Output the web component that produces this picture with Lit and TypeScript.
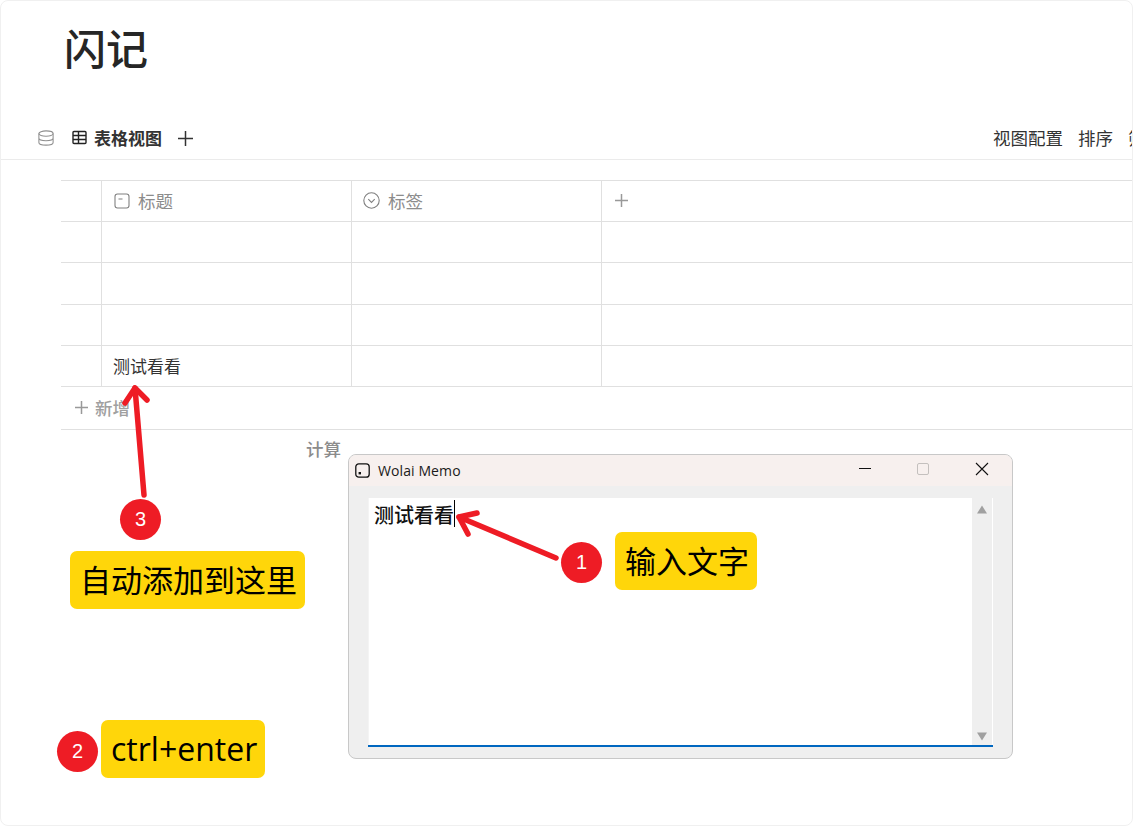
import { LitElement, html, css, svg } from "lit";
import { customElement } from "lit/decorators.js";

@customElement("app-root")
export class AppRoot extends LitElement {
  static styles = css`
    :host { display: block; width: 1133px; height: 826px; overflow: hidden; background: #fff; font-family: "Noto Sans CJK SC", "Noto Sans", sans-serif; color: #333; }
    .page { position: relative; box-sizing: border-box; width: 1133px; height: 826px; border: 1px solid #f0f0f0; border-radius: 8px; padding-top: 18px; overflow: hidden; background: #fff; }
    h1 { margin: 0 0 0 63px; font-size: 42px; line-height: 56px; font-weight: 500; color: #262626; height: 56px; }
    .bar { display: flex; align-items: center; height: 37px; padding-bottom: 3px; margin-top: 44px; border-bottom: 1px solid #ebebeb; padding-left: 37px; box-sizing: content-box; }
    .bar svg { flex: none; display: block; }
    .tab { display: flex; align-items: center; margin-left: 18px; font-size: 17px; font-weight: 700; color: #333; gap: 7px; }
    .add { margin-left: 16px; margin-top: 1px; }
    .right { margin-left: auto; display: flex; gap: 15px; font-size: 17.5px; color: #333; white-space: nowrap; width: 139px; overflow: hidden; }
    .table { margin: 20px 0 0 60px; border-top: 1px solid #e0e0e0; }
    .row { display: grid; grid-template-columns: 40px 250px 250px 1fr; border-bottom: 1px solid #e0e0e0; box-sizing: border-box; height: 41px; }
    .row.tall { height: 42px; }
    .cell { border-left: 1px solid #e0e0e0; display: flex; align-items: center; padding: 0 0 2px 11px; box-sizing: border-box; font-size: 17px; color: #333; gap: 8px; }
    .cell:first-child { border-left: none; }
    .head .cell { color: #8c8c8c; font-size: 17.5px; }
    .head .cell svg { flex: none; margin-top: 1px; }
    .pluscell { padding-left: 13px; }
    .new { display: flex; align-items: center; height: 43px; padding-bottom: 2px; box-sizing: border-box; border-bottom: 1px solid #e0e0e0; padding-left: 14px; gap: 7px; color: #a0a0a0; font-size: 17.5px; font-weight: 500; }
    .calc { position: absolute; left: 305px; top: 436px; font-size: 17.5px; color: #8c8c8c; line-height: 24px; font-weight: 500; }
    .win { position: absolute; left: 347px; top: 453px; width: 665px; height: 305px; box-sizing: border-box; border: 1px solid #c8c8c8; border-radius: 8px; background: #efefef; overflow: hidden; display: flex; flex-direction: column; }
    .title { height: 31px; background: #f7f0ee; display: flex; align-items: center; padding-left: 6px; font-family: "Open Sans", "Liberation Sans", sans-serif; font-size: 14px; letter-spacing: .1px; color: #1a1a1a; position: relative; flex: none; }
    .title span { margin-left: 8px; margin-top: -1px; }
    .ctl { position: absolute; top: 7px; }
    .ctl.min { left: 509px; } .ctl.max { left: 567px; } .ctl.cls { left: 626px; }
    .edit { margin: 12px 0 0 19px; width: 625px; height: 249px; background: #fff; box-sizing: border-box; border-bottom: 2px solid #0067c0; display: flex; position: relative; }
    .gutter { width: 1px; background: #f4f4f4; flex: none; }
    .txt { padding: 0 0 0 5px; font-size: 20px; font-weight: 500; line-height: 33px; color: #111; flex: 1; height: 28px; display: flex; }
    .caret { width: 1px; height: 27px; background: #000; margin-top: 2px; }
    .scroll { width: 20px; margin-right: 1px; background: #efefef; display: flex; flex-direction: column; justify-content: space-between; align-items: center; padding: 7px 0 4px; box-sizing: border-box; }
    .tag { position: absolute; background: #ffd60a; border-radius: 7px; color: #000; font-size: 31px; line-height: 56px; height: 58px; padding: 0 10px; white-space: nowrap; box-sizing: border-box; font-weight: 400; }
    .tag.t1 { left: 614px; top: 531px; width: 142px; }
    .tag.t2 { left: 100px; top: 719px; width: 164px; font-family: "Open Sans", sans-serif; font-size: 32px; line-height: 58px; }
    .tag.t3 { left: 69px; top: 550px; width: 235px; }
    .num { position: absolute; width: 41px; height: 41px; border-radius: 50%; background: #ee1c25; color: #fff; font-family: "Liberation Sans", sans-serif; font-size: 20px; display: flex; align-items: center; justify-content: center; }
    .n1 { left: 560px; top: 541px; } .n2 { left: 56px; top: 730px; } .n3 { left: 119px; top: 498px; }
    .arrows { position: absolute; left: -1px; top: -1px; pointer-events: none; }
  `;

  private plus(size: number, color: string) {
    const a = size / 2;
    return html`<svg width=${size} height=${size} viewBox="0 0 ${size} ${size}" fill="none" stroke=${color} stroke-width="1.5"><path d="M${a} 0V${size}M0 ${a}H${size}"/></svg>`;
  }

  render() {
    return html`
      <div class="page">
        <h1>闪记</h1>
        <div class="bar">
          <svg width="16" height="16" viewBox="0 0 18 18" fill="none" stroke="#8f8f8f" stroke-width="1.2"><ellipse cx="9" cy="4" rx="8" ry="3"/><path d="M1 4v10c0 1.7 3.6 3 8 3s8-1.3 8-3V4M1 9c0 1.7 3.6 3 8 3s8-1.3 8-3"/></svg>
          <div class="tab">
            <svg width="15" height="15" viewBox="0 0 15 15" fill="none" stroke="#222" stroke-width="1.4"><rect x="1" y="1.5" width="13" height="12" rx="1"/><path d="M1 5.5h13M1 9.5h13M6.5 1.5v12"/></svg>
            表格视图
          </div>
          <span class="add">${this.plus(15, "#333")}</span>
          <div class="right"><span>视图配置</span><span>排序</span><span>筛选</span></div>
        </div>
        <div class="table">
          <div class="row head">
            <div class="cell"></div>
            <div class="cell"><svg width="17" height="16" viewBox="0 0 17 16" fill="none" stroke="#808080" stroke-width="1.1"><rect x="2" y="1" width="14" height="14" rx="2.5"/><path d="M5.5 6h4"/></svg>标题</div>
            <div class="cell"><svg width="17" height="17" viewBox="0 0 17 17" fill="none" stroke="#808080" stroke-width="1.1"><circle cx="8.5" cy="8.5" r="7.7"/><path d="M5.3 7.2l3.2 3.2 3.2-3.2"/></svg>标签</div>
            <div class="cell pluscell">${this.plus(13, "#999")}</div>
          </div>
          ${[0, 1, 2].map((i) => html`<div class="row ${i === 1 ? "tall" : ""}"><div class="cell"></div><div class="cell"></div><div class="cell"></div><div class="cell"></div></div>`)}
          <div class="row"><div class="cell"></div><div class="cell">测试看看</div><div class="cell"></div><div class="cell"></div></div>
          <div class="new">${this.plus(13, "#999")}新增</div>
        </div>
        <div class="calc">计算</div>

        <div class="win">
          <div class="title">
            <svg width="15" height="15" viewBox="0 0 15 15" fill="none" stroke="#111" stroke-width="1.3"><rect x=".8" y=".8" width="13.4" height="13.4" rx="3"/><rect x="3.6" y="9" width="2.4" height="2.4" fill="#111" stroke="none"/></svg>
            <span>Wolai Memo</span>
            <svg class="ctl min" width="14" height="14" viewBox="0 0 14 14" stroke="#111" stroke-width="1"><path d="M1 6.5h12"/></svg>
            <svg class="ctl max" width="14" height="14" viewBox="0 0 14 14" fill="none" stroke="#c4c0be" stroke-width="1"><rect x="1.5" y="1.5" width="11" height="11" rx="1.5"/></svg>
            <svg class="ctl cls" width="14" height="14" viewBox="0 0 14 14" stroke="#111" stroke-width="1.1"><path d="M1 1l12 12M13 1L1 13"/></svg>
          </div>
          <div class="edit">
            <div class="gutter"></div>
            <div class="txt">测试看看<i class="caret"></i></div>
            <div class="scroll">
              <svg width="12" height="9" viewBox="0 0 12 9" fill="#a0a0a0"><path d="M6 0.5L11 8.5H1Z"/></svg>
              <svg width="12" height="9" viewBox="0 0 12 9" fill="#a0a0a0"><path d="M1 .5H11L6 8.5Z"/></svg>
            </div>
          </div>
        </div>

        <svg class="arrows" width="1133" height="826" fill="none" stroke="#ee1c25" stroke-width="5.5" stroke-linecap="round" stroke-linejoin="round">
          ${svg`<path d="M556 558L459 517"/><path d="M477 513L459 517L468 534"/>`}
          ${svg`<path d="M144 495L135 388"/><path d="M125 403L135 388L147 400" />`}
        </svg>

        <div class="tag t1">输入文字</div>
        <div class="num n1">1</div>
        <div class="tag t2">ctrl+enter</div>
        <div class="num n2">2</div>
        <div class="tag t3">自动添加到这里</div>
        <div class="num n3">3</div>
      </div>
    `;
  }
}
